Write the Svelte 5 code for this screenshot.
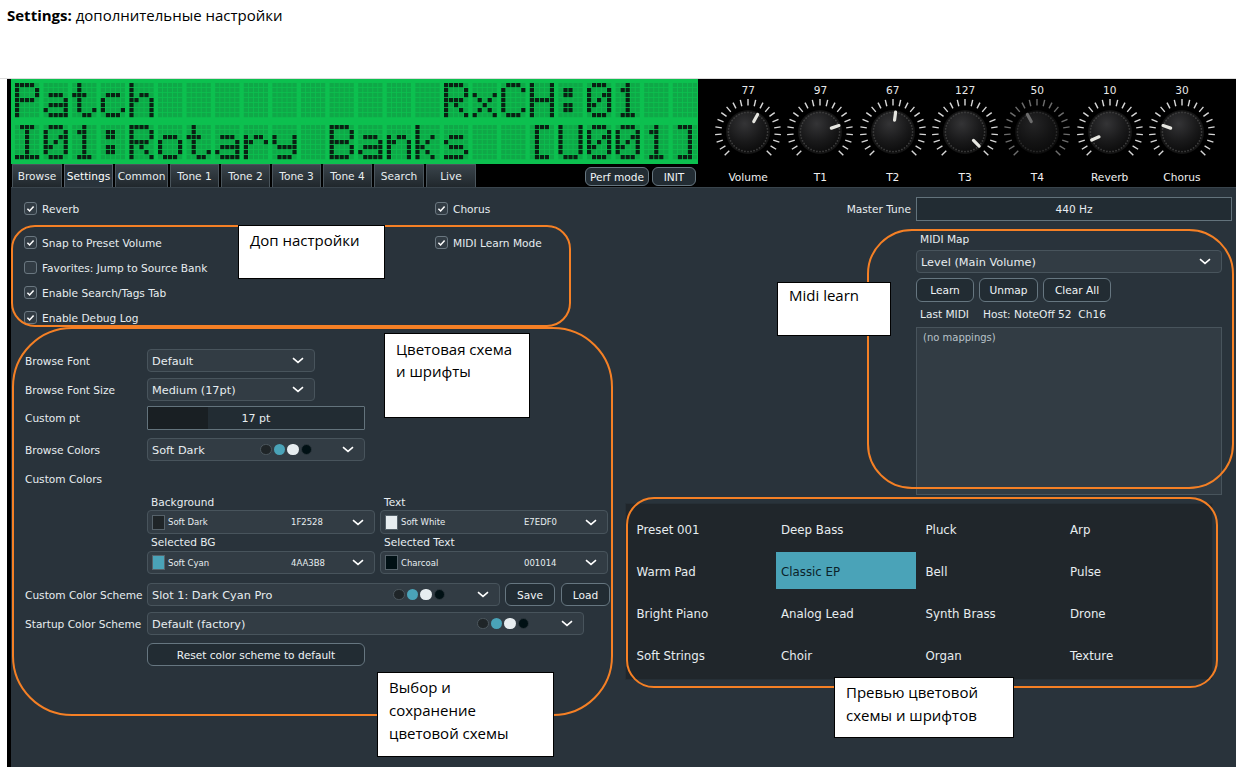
<script>
  const FONT = {
    P: ['11110','10001','10001','11110','10000','10000','10000'],
    a: ['00000','00000','01110','00001','01111','10001','01111'],
    t: ['01000','01000','11100','01000','01000','01001','00110'],
    c: ['00000','00000','01110','10000','10000','10001','01110'],
    h: ['10000','10000','10110','11001','10001','10001','10001'],
    R: ['11110','10001','10001','11110','10100','10010','10001'],
    x: ['00000','00000','10001','01010','00100','01010','10001'],
    C: ['01110','10001','10000','10000','10000','10001','01110'],
    H: ['10001','10001','10001','11111','10001','10001','10001'],
    ':': ['00000','01100','01100','00000','01100','01100','00000'],
    '0': ['01110','10001','10011','10101','11001','10001','01110'],
    '1': ['00100','01100','00100','00100','00100','00100','01110'],
    I: ['01110','00100','00100','00100','00100','00100','11111'],
    o: ['00000','00000','01110','10001','10001','10001','01110'],
    r: ['00000','00000','10110','11001','10000','10000','10000'],
    y: ['00000','00000','10001','10001','01111','00001','01110'],
    B: ['11110','10001','10001','11110','10001','10001','11110'],
    n: ['00000','00000','10110','11001','10001','10001','10001'],
    k: ['10000','10000','10010','10100','11000','10100','10010'],
    s: ['00000','00000','01110','10000','01110','00001','11110'],
    '[': ['01110','01000','01000','01000','01000','01000','01110'],
    U: ['10001','10001','10001','10001','10001','10001','01110'],
    ']': ['01110','00010','00010','00010','00010','00010','01110']
  };
  const lines = ['Patch          RxCH:01  ', 'I01:Rotary Banks  [U001]'];
  const dots = [];
  lines.forEach((line, l) => {
    [...line].forEach((ch, i) => {
      const g = FONT[ch];
      for (let r = 0; r < 7; r++) for (let c = 0; c < 5; c++) {
        dots.push({ x: 4 + i * 28.6 + c * 5, y: 4 + l * 42 + r * 5, on: !!g && g[r][c] === '1' });
      }
    });
  });

  const knobs = [
    { v: 77, l: 'Volume' }, { v: 97, l: 'T1' }, { v: 67, l: 'T2' }, { v: 127, l: 'T3' },
    { v: 50, l: 'T4', dim: true }, { v: 10, l: 'Reverb' }, { v: 30, l: 'Chorus' }
  ];
  const ticks = Array.from({ length: 21 }, (_, i) => -135 + i * 13.5);
  const studs = Array.from({ length: 40 }, (_, i) => i * 9);
  const tabs = [
    ['Browse', 50], ['Settings', 49], ['Common', 53], ['Tone 1', 49], ['Tone 2', 49],
    ['Tone 3', 49], ['Tone 4', 49], ['Search', 50], ['Live', 50]
  ];
  const scheme = ['#1f2528', '#4aa3b8', '#e7edf0', '#001014'];
  const swatches = [
    { t: 'Background', n: 'Soft Dark', h: '1F2528', c: '#1f2528' },
    { t: 'Text', n: 'Soft White', h: 'E7EDF0', c: '#e7edf0' },
    { t: 'Selected BG', n: 'Soft Cyan', h: '4AA3B8', c: '#4aa3b8' },
    { t: 'Selected Text', n: 'Charcoal', h: '001014', c: '#001014' }
  ];
  const presets = [
    'Preset 001', 'Deep Bass', 'Pluck', 'Arp',
    'Warm Pad', 'Classic EP', 'Bell', 'Pulse',
    'Bright Piano', 'Analog Lead', 'Synth Brass', 'Drone',
    'Soft Strings', 'Choir', 'Organ', 'Texture'
  ];
</script>

{#snippet chev()}
  <svg class="chev" viewBox="0 0 12 7" width="12" height="7"><path d="M1 1.2 L6 5.4 L11 1.2" /></svg>
{/snippet}
{#snippet dotset()}
  <span class="dots">{#each scheme as c}<i class="dot" style:background={c}></i>{/each}</span>
{/snippet}
{#snippet check(label, on = true)}
  <div class="check">
    <span class="box">{#if on}<svg viewBox="0 0 13 13" width="13" height="13"><path d="M3.4 6.8 L5.6 9 L9.6 4.4" /></svg>{/if}</span>
    <span>{label}</span>
  </div>
{/snippet}

<div class="page">
  <div class="caption"><b>Settings:</b> дополнительные настройки</div>
  <div class="app">
    <div class="top">
      <div class="top-left">
        <svg class="lcd" viewBox="0 0 687 85" width="687" height="85" role="img" aria-label="Patch RxCH:01 I01:Rotary Banks [U001]">
          {#each dots as d}
            <rect x={d.x} y={d.y} width="4.2" height="4.2" class={d.on ? 'on' : 'off'} />
          {/each}
        </svg>
        <div class="tabbar">
          <div class="tabs">
            {#each tabs as [t, w]}
              <div class="tab" class:active={t === 'Settings'} style:width="{w}px">{t}</div>
            {/each}
          </div>
          <div class="topbtns">
            <div class="btn perf">Perf mode</div>
            <div class="btn init">INIT</div>
          </div>
        </div>
      </div>
      <div class="knobs">
        {#each knobs as k}
          <div class="knob" class:dim={k.dim}>
            <div class="kval">{k.v}</div>
            <svg viewBox="-36 -36 72 72" width="72" height="72">
              <defs>
                <radialGradient id="kg" cx="0.42" cy="0.3" r="0.8">
                  <stop offset="0" stop-color="#343436" />
                  <stop offset="0.55" stop-color="#19191a" />
                  <stop offset="1" stop-color="#070707" />
                </radialGradient>
              </defs>
              {#each ticks as a}
                <line class="tick" x1="0" y1="-26.5" x2="0" y2="-33" transform="rotate({a})" />
              {/each}
              <circle r="22" fill="#141414" />
              <circle r="20.5" fill="url(#kg)" />
              {#each studs as a}
                <circle class="stud" cx="0" cy="-19.6" r="0.9" transform="rotate({a})" />
              {/each}
              <line class="ptr" x1="0" y1="-12" x2="0" y2="-20" transform="rotate({(k.v / 127) * 270 - 135})" />
            </svg>
            <div class="klabel">{k.l}</div>
          </div>
        {/each}
      </div>
    </div>

    <div class="content">
      <div class="left">
        <div class="checks">
          <div class="chk-col">
            <div class="reverb">{@render check('Reverb')}</div>
            {@render check('Snap to Preset Volume')}
            {@render check('Favorites: Jump to Source Bank', false)}
            {@render check('Enable Search/Tags Tab')}
            {@render check('Enable Debug Log')}
          </div>
          <div class="chk-col">
            <div class="reverb">{@render check('Chorus')}</div>
            {@render check('MIDI Learn Mode')}
          </div>
        </div>

        <div class="row r1">
          <span class="lbl">Browse Font</span>
          <div class="sel w168"><span>Default</span>{@render chev()}</div>
        </div>
        <div class="row r2">
          <span class="lbl">Browse Font Size</span>
          <div class="sel w168"><span>Medium (17pt)</span>{@render chev()}</div>
        </div>
        <div class="row r3">
          <span class="lbl">Custom pt</span>
          <div class="slider"><div class="fill"></div><span>17 pt</span></div>
        </div>
        <div class="row r4">
          <span class="lbl">Browse Colors</span>
          <div class="sel w218"><span>Soft Dark</span>{@render dotset()}{@render chev()}</div>
        </div>
        <div class="row r5"><span class="lbl">Custom Colors</span></div>

        <div class="swatches">
          {#each swatches as s}
            <div class="swatch">
              <div class="sw-title">{s.t}</div>
              <div class="sel sw-sel">
                <i class="chip" style:background={s.c}></i>
                <span class="sw-name">{s.n}</span>
                <span class="sw-hex">{s.h}</span>
                {@render chev()}
              </div>
            </div>
          {/each}
        </div>

        <div class="row r6">
          <span class="lbl">Custom Color Scheme</span>
          <div class="sel w353"><span>Slot 1: Dark Cyan Pro</span>{@render dotset()}{@render chev()}</div>
          <div class="btn save">Save</div>
          <div class="btn load">Load</div>
        </div>
        <div class="row r7">
          <span class="lbl">Startup Color Scheme</span>
          <div class="sel w437"><span>Default (factory)</span>{@render dotset()}{@render chev()}</div>
        </div>
        <div class="row r8">
          <span class="lbl"></span>
          <div class="btn reset">Reset color scheme to default</div>
        </div>
      </div>

      <div class="right">
        <div class="tune">
          <span>Master Tune</span>
          <div class="tune-field">440 Hz</div>
        </div>
        <div class="midi">
          <div class="m-label">MIDI Map</div>
          <div class="sel m-sel"><span>Level (Main Volume)</span>{@render chev()}</div>
          <div class="m-btns">
            <div class="btn learn">Learn</div>
            <div class="btn unmap">Unmap</div>
            <div class="btn clear">Clear All</div>
          </div>
          <div class="m-last"><span>Last MIDI</span><span>Host: NoteOff 52&nbsp; Ch16</span></div>
          <div class="m-list">(no mappings)</div>
        </div>
        <div class="preview">
          {#each presets as p}
            <div class="cell" class:sel-cell={p === 'Classic EP'}>{p}</div>
          {/each}
        </div>
      </div>
    </div>
  </div>

  <div class="ring ring2"></div>
  <div class="ring ring1"></div>
  <div class="ring ring3"></div>
  <div class="ring ring4"></div>
  <div class="note n1">Доп настройки</div>
  <div class="note n2">Цветовая схема<br />и шрифты</div>
  <div class="note n3">Midi learn</div>
  <div class="note n4">Выбор и<br />сохранение<br />цветовой схемы</div>
  <div class="note n5">Превью цветовой<br />схемы и шрифтов</div>
</div>

<style>
  :global(body) { margin: 0; background: #fff; }
  .page {
    position: relative;
    width: 1236px;
    height: 767px;
    overflow: hidden;
    background: #fff;
    font-family: "DejaVu Sans", sans-serif;
    font-size: 10.6px;
    color: #e7edf0;
  }
  .caption {
    box-sizing: border-box;
    height: 79px;
    padding: 5px 0 0 7px;
    font-family: "Open Sans", sans-serif;
    font-size: 15px;
    line-height: 20px;
    color: #000;
    border-bottom: 1px solid #dcdcdc;
  }
  .app {
    box-sizing: border-box;
    height: 688px;
    margin-left: 7px;
    border-left: 4px solid #000;
    background: #29333b;
    display: flex;
    flex-direction: column;
  }
  .top {
    display: flex;
    height: 109px;
    background: #000;
    border-bottom: 1px solid #39444c;
    box-sizing: border-box;
  }
  .top-left { width: 687px; display: flex; flex-direction: column; }
  .lcd { display: block; background: #0cc04f; }
  .lcd .off { fill: #0fa848; }
  .lcd .on { fill: #0a2013; }
  .tabbar { display: flex; flex: 1; justify-content: space-between; }
  .tabs { display: flex; gap: 2px; padding-left: 1px; align-items: stretch; }
  .tab {
    box-sizing: border-box;
    display: flex;
    align-items: center;
    justify-content: center;
    border: 1px solid #4a555c;
    border-bottom: none;
    background: linear-gradient(#3a444b, #20272c);
    color: #e7edf0;
  }
  .tab.active { background: #29333b; border-color: #55606a; color: #fff; }
  .topbtns { display: flex; gap: 3px; padding: 3px 2px 1px 0; }
  .btn {
    box-sizing: border-box;
    display: flex;
    align-items: center;
    justify-content: center;
    border: 1px solid #667680;
    border-radius: 6px;
    background: #222c33;
    color: #f0f4f6;
  }
  .perf { width: 64px; }
  .init { width: 44px; }
  .knobs { display: flex; padding-left: 14px; }
  .knob {
    width: 72.3px;
    display: flex;
    flex-direction: column;
    align-items: center;
    color: #e8e8e8;
  }
  .knob svg { display: block; margin: 0 0 1px; }
  .kval { height: 17px; line-height: 22px; }
  .klabel { line-height: 16px; color: #f0f0f0; }
  .tick { stroke: #d8d8d8; stroke-width: 1.4; }
  .stud { fill: #3d3d3d; }
  .ptr { stroke: #e6e6e0; stroke-width: 3.2; stroke-linecap: round; }
  .dim .tick { stroke: #6e6e6e; }
  .dim .ptr { stroke: #6d6d6d; }
  .dim svg circle { opacity: 0.6; }

  .content { display: flex; flex: 1; min-height: 0; padding-top: 9px; }
  .left { width: 613px; box-sizing: border-box; padding-left: 14px; }
  .right { width: 608px; }

  .checks { display: flex; margin: -1px 0 0 -1px; }
  .chk-col { display: flex; flex-direction: column; }
  .chk-col:first-child { width: 411px; }
  .check { display: flex; align-items: center; gap: 5px; height: 25px; }
  .reverb { margin-bottom: 9px; }
  .box {
    box-sizing: border-box;
    width: 13px;
    height: 13px;
    border: 1px solid #6a7780;
    border-radius: 3px;
    background: #323c44;
    position: relative;
  }
  .box svg { position: absolute; left: -1px; top: -1px; }
  .box path { fill: none; stroke: #fff; stroke-width: 1.5; }

  .row { display: flex; align-items: center; }
  .lbl { width: 122px; flex: none; white-space: nowrap; }
  .r1 { margin-top: 19px; height: 23px; }
  .r2 { margin-top: 6px; height: 23px; }
  .r3 { margin-top: 5px; height: 24px; }
  .r4 { margin-top: 8px; height: 23px; }
  .r5 { margin-top: 6px; height: 23px; }
  .r6 { margin-top: 9px; height: 23px; }
  .r7 { margin-top: 6px; height: 23px; }
  .r8 { margin-top: 8px; height: 23px; }

  .sel {
    box-sizing: border-box;
    height: 100%;
    display: flex;
    align-items: center;
    padding: 0 10px 0 4px;
    background: #323c44;
    border: 1px solid #48545c;
    border-radius: 4px;
    font-size: 11.3px;
  }
  .sel > span:first-child { flex: 1; white-space: nowrap; padding-top: 1px; }
  .chev { flex: none; }
  .chev path { fill: none; stroke: #fff; stroke-width: 1.6; }
  .w168 { width: 168px; }
  .w218 { width: 218px; }
  .w353 { width: 353px; }
  .w437 { width: 437px; }
  .dots { display: flex; gap: 2px; margin-right: 32px; }
  .w218 .dots { margin-right: 30px; }
  .dot { width: 11.5px; height: 11.5px; box-sizing: border-box; border-radius: 50%; }
  .dot:first-child { border: 1px solid #4c575e; }
  .dot:last-child { border: 1px solid #2b353c; }

  .slider {
    box-sizing: border-box;
    position: relative;
    width: 218px;
    height: 24px;
    display: flex;
    align-items: center;
    justify-content: center;
    border: 1px solid #63737c;
    background: #222c33;
    border-radius: 1px;
    font-size: 11px;
  }
  .slider .fill { position: absolute; left: 0; top: 0; bottom: 0; width: 60px; background: #191f23; }
  .slider span { position: relative; }

  .swatches {
    display: grid;
    grid-template-columns: 228px 228px;
    column-gap: 5px;
    margin-left: 122px;
    margin-top: 4px;
  }
  .sw-title { height: 16px; line-height: 16px; padding-left: 4px; }
  .swatch:nth-child(n+3) .sw-title { height: 17px; }
  .sw-sel { height: 24px; padding: 0 10px 0 4px; }
  .swatch:nth-child(n+3) .sw-sel { height: 23px; }
  .chip { width: 13px; height: 15px; box-sizing: border-box; border: 1px solid #56626a; margin-right: 3px; flex: none; }
  .sw-name { width: 123px; font-size: 8.5px; flex: none; }
  .sw-hex { flex: 1; font-size: 8.5px; }

  .save { width: 50px; height: 23px; margin-left: 5px; }
  .load { width: 49px; height: 23px; margin-left: 6px; }
  .reset { width: 218px; height: 23px; }

  .tune { display: flex; align-items: center; justify-content: flex-end; gap: 5px; height: 24px; }
  .tune-field {
    box-sizing: border-box;
    width: 316px;
    height: 24px;
    display: flex;
    align-items: center;
    justify-content: center;
    border: 1px solid #63737c;
    background: #222c33;
  }
  .midi { margin-left: 292px; width: 306px; display: flex; flex-direction: column; }
  .m-label { margin-top: 10px; height: 16px; line-height: 16px; padding-left: 4px; }
  .m-sel { margin-top: 3px; height: 23px; flex: none; }
  .m-btns { display: flex; gap: 5px; margin-top: 5px; height: 24px; }
  .learn { width: 58px; }
  .unmap { width: 59px; }
  .clear { width: 68px; }
  .m-last { display: flex; gap: 14px; margin-top: 4px; height: 16px; line-height: 16px; padding-left: 4px; }
  .m-list {
    box-sizing: border-box;
    margin-top: 5px;
    height: 168px;
    padding: 4px 6px;
    border: 1px solid #48545c;
    background: #323c44;
    font-size: 10px;
    color: #b8c2c8;
  }
  .preview {
    box-sizing: border-box;
    width: 588px;
    height: 177px;
    margin: 8px 0 0 1px;
    padding: 6px 0 0 5.5px;
    background: #20262b;
    border: 1px solid #262f36;
    display: grid;
    grid-template-columns: repeat(4, 140px);
    grid-auto-rows: 37px;
    column-gap: 4.5px;
    row-gap: 5px;
    font-size: 11.8px;
  }
  .cell { box-sizing: border-box; display: flex; align-items: center; padding: 2px 0 0 5px; color: #e7edf0; }
  .sel-cell { background: #4aa3b8; color: #0b2229; }

  .ring { position: absolute; box-sizing: border-box; border: 2px solid #f58025; }
  .ring1 { left: 11px; top: 225px; width: 560px; height: 102px; border-radius: 24px; }
  .ring2 { left: 12px; top: 327px; width: 601px; height: 389px; border-radius: 60px; }
  .ring3 { left: 867px; top: 229px; width: 367px; height: 260px; border-radius: 45px; }
  .ring4 { left: 626px; top: 497px; width: 592px; height: 191px; border-radius: 28px; }

  .note {
    position: absolute;
    box-sizing: border-box;
    background: #fff;
    border: 1px solid #000;
    font-family: "Open Sans", sans-serif;
    font-size: 15px;
    line-height: 23px;
    color: #000;
  }
  .n1 { left: 238px; top: 225px; width: 147px; height: 54px; padding: 3px 11px; }
  .n2 { left: 384px; top: 333px; width: 146px; height: 85px; padding: 4px 11px; line-height: 22px; }
  .n3 { left: 777px; top: 282px; width: 114px; height: 54px; padding: 1px 11px; }
  .n4 { left: 377px; top: 672px; width: 177px; height: 85px; padding: 3px 11px; }
  .n5 { left: 834px; top: 677px; width: 180px; height: 61px; padding: 3px 11px; }
</style>
